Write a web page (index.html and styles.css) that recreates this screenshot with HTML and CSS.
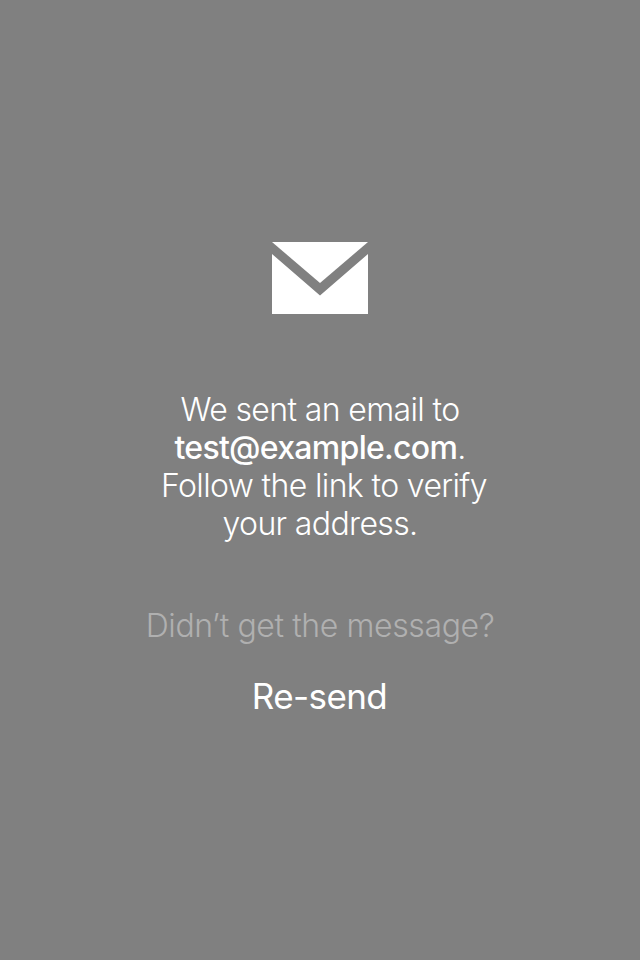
FILE: index.html
```html
<!DOCTYPE html>
<html lang="en">
<head>
<meta charset="utf-8">
<title>Verify email</title>
<link rel="stylesheet" href="styles.css">
</head>
<body>
<main class="screen">
  <svg class="mail-icon" viewBox="0 0 96 72" aria-hidden="true">
    <path d="M0 0H96L48 41Z"/>
    <path d="M0 12L48 53.5L96 12V72H0Z"/>
  </svg>
  <p class="message">
    <span class="line">We sent an email to</span>
    <span class="line address"><strong>test@example.com</strong>.</span>
    <span class="line indented">Follow the link to verify</span>
    <span class="line">your address.</span>
  </p>
  <p class="hint">Didn’t get the message?</p>
  <button class="resend" type="button">Re-send</button>
</main>
</body>
</html>
```

FILE: styles.css
```css
body {
  margin: 0;
  background: #808080;
  color: #fff;
  font-family: Inter, sans-serif;
}
.screen {
  height: 960px;
  box-sizing: border-box;
  padding-top: 242px;
  display: flex;
  flex-direction: column;
  align-items: center;
}
.mail-icon {
  width: 96px;
  height: 72px;
  fill: #fff;
}
.message {
  margin: 77px 0 0;
  text-align: center;
  font-size: 32px;
  line-height: 38px;
  font-weight: 300;
  letter-spacing: -0.63px;
}
.line {
  display: block;
  white-space: nowrap;
}
.address {
  letter-spacing: -0.7px;
}
.indented {
  padding-left: 8px;
}
.message strong {
  font-weight: 550;
}
.hint {
  margin: 64px 0 0;
  font-size: 32px;
  line-height: 38px;
  font-weight: 300;
  letter-spacing: -0.4px;
  color: #b0b0b0;
}
.resend {
  margin: 29px 1px 0 0;
  padding: 0;
  border: 0;
  background: none;
  color: inherit;
  font: 400 35px/44px Inter, sans-serif;
  letter-spacing: -0.6px;
}
```
